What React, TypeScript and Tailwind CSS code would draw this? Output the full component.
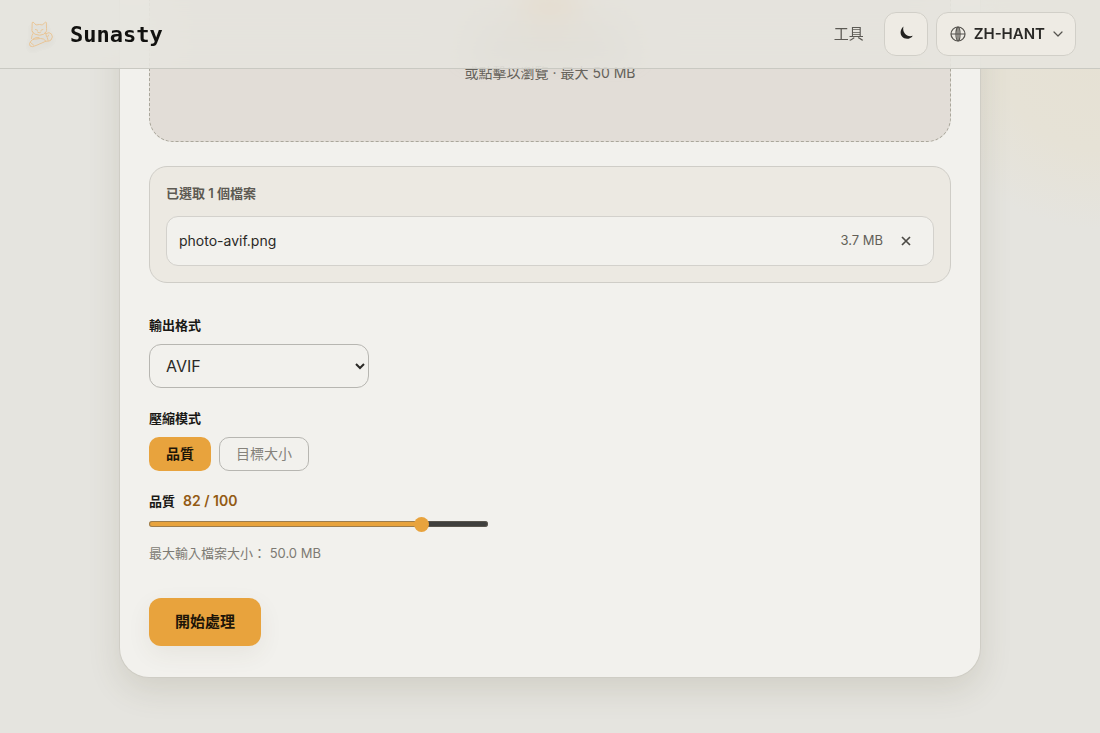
import { useState } from "react";

function CatLogo() {
  return (
    <svg viewBox="0 0 32 32" className="size-8 opacity-90 drop-shadow-md" fill="none" stroke="#e9bd86" strokeWidth="0.900" strokeLinecap="round" strokeLinejoin="round" aria-hidden="true">
      <path d="M8.500 14q-1-1.500-.5-3.500L8.200 4.500q.8-.8 1.800.3l2 2.200q3.500-1 6.500 0l2-2.200q1-1.100 1.800-.3l.2 6q.5 2-.5 3.500-1.500 3-6.500 3.200Q10 17 8.500 14z" />
      <path d="M11.500 11.500l2 .8M19 11.500l-2 .8M13.500 14l1.700.8 1.700-.8M9 15.500q-1.500 2-1.500 5M21 15q1.500 1 1.500 3.500" />
      <path d="M22 15.500q3.500-2 5.500.5 2 3-.5 6-1.500 1.500-5 1.200L12 27.500q-4 2-6 .5-1.500-2.500 1-5 1-1.500 3.500-1.800l6-.7q3-.5 5.500 2.700" />
      <path d="M6.500 24.500l3 2.500M9 21q2-2 6-1.500M24.500 17q-2.500 2-.5 5.500" />
    </svg>
  );
}

function Header() {
  return (
    <header className="sticky top-0 z-10 flex h-[69px] items-center justify-between border-b border-[#c9c9c2] bg-[#e6e5de]/80 px-6 backdrop-blur-xl">
      <a href="#home" className="flex items-center gap-[14px] font-['DejaVu_Sans_Mono',monospace] text-[22px] font-bold text-[#11110f]">
        <CatLogo />
        <span>Sunasty</span>
      </a>
      <nav className="flex items-center gap-2">
        <a href="#tools" className="mr-3 text-[15px] text-[#5c5a54]">工具</a>
        <button type="button" aria-label="切換深色模式" className="flex size-11 items-center justify-center rounded-xl border border-[#d1cfc8] bg-[#eeebe4]">
          <svg viewBox="0 0 16 16" className="size-4" fill="#22211f" aria-hidden="true">
            <path d="M5.500.500C2.500 3 1.600 7.300 4 10.600c2.500 3 8 3.300 10.800-.8-3.300.9-6 .2-7.800-2C5.200 5.600 4.800 2.900 5.500.500z" />
          </svg>
        </button>
        <button type="button" className="flex h-11 items-center gap-2 rounded-xl border border-[#d1cfc8] bg-[#eeebe4] pr-3 pl-[13px] text-[15px] font-semibold text-[#2a2926]">
          <svg viewBox="0 0 16 16" className="size-4" fill="none" stroke="#55534e" strokeWidth="1.200" aria-hidden="true">
            <circle cx="8" cy="8" r="7" />
            <path d="M1 8h14M8 1v14" />
            <ellipse cx="8" cy="8" rx="2" ry="7" />
          </svg>
          <span>ZH-HANT</span>
          <svg viewBox="0 0 10 10" className="size-[10px]" fill="none" stroke="#55534e" strokeWidth="1.200" strokeLinecap="round" strokeLinejoin="round" aria-hidden="true">
            <path d="M1 3l4 4 4-4" />
          </svg>
        </button>
      </nav>
    </header>
  );
}

export default function App() {
  const [quality, setQuality] = useState(82);
  const fill = `${quality}%`;
  return (
    <div className="min-h-screen bg-[#e5e4df] bg-[radial-gradient(circle_at_100%_50px,#e6e1d4_0,#e6e2d6_100px,#e5e4df_180px)] font-[Inter,'Noto_Sans_CJK_TC',sans-serif] text-[#2a2926]">
      <Header />
      <main className="-mt-[69px] px-6 pb-14">
        <section className="mx-auto max-w-[862px] rounded-b-[30px] border border-t-0 border-[#cfcdc5] bg-[#f2f1ed] px-[29px] pb-[31px] shadow-[0_12px_32px_rgba(90,85,50,0.14)]">
          <div className="flex flex-col items-center rounded-b-3xl border border-t-0 border-dashed border-[#aaa79b] bg-[#e2ddd7] pb-14">
            <div className="h-6 w-14 rounded-b-full bg-[#eda75c] blur-md" />
            <div className="my-2 h-[21px] w-40 rounded-md bg-[#bcb8b0] blur-md" />
            <p className="text-sm leading-6 text-[#625f58]">或點擊以瀏覽 · 最大 50 MB</p>
          </div>

          <div className="mt-6 rounded-[18px] border border-[#cfcdc7] bg-[#ece9e2] p-4">
            <h2 className="text-[13px] leading-5 font-semibold text-[#5d5a53]">已選取 1 個檔案</h2>
            <ul className="mt-[13px]">
              <li className="flex h-[50px] items-center rounded-xl border border-[#d3d1cc] bg-[#f2f1ed] px-3">
                <span className="flex-1 text-sm">photo-avif.png</span>
                <span className="text-[13px] text-[#625f58]">3.7 MB</span>
                <button type="button" aria-label="移除 photo-avif.png" className="ml-2 flex w-[30px] items-center justify-center">
                  <svg viewBox="0 0 10 10" className="size-[10px]" stroke="#4c4a45" strokeWidth="1.700" aria-hidden="true">
                    <path d="M1 1l8 8M9 1L1 9" />
                  </svg>
                </button>
              </li>
            </ul>
          </div>

          <form onSubmit={(e) => e.preventDefault()} className="mt-8 flex flex-col items-start">
            <label htmlFor="format" className="text-[13px] leading-5 font-semibold text-[#191815]">輸出格式</label>
            <select id="format" defaultValue="AVIF" className="mt-[9px] h-11 w-[220px] rounded-xl border border-[#b7b6b1] bg-[#f2f1ed] px-3 text-base">
              <option>AVIF</option>
              <option>WebP</option>
              <option>PNG</option>
            </select>

            <fieldset className="mt-5">
              <legend className="text-[13px] leading-5 font-semibold text-[#191815]">壓縮模式</legend>
              <div className="mt-[9px] flex gap-2">
                <button type="button" className="h-[34px] rounded-[10px] bg-[#e8a33d] px-[17px] text-sm font-semibold text-[#1d1508]">品質</button>
                <button type="button" className="h-[34px] rounded-[10px] border border-[#b7b6b1] px-4 text-sm text-[#85827b]">目標大小</button>
              </div>
            </fieldset>

            <label htmlFor="quality" className="mt-5 flex gap-2 text-[13px] leading-5 font-semibold text-[#191815]">
              品質 <output className="text-sm leading-5 text-[#925a13]">{quality} / 100</output>
            </label>
            <input
              id="quality"
              type="range"
              min={1}
              max={100}
              value={quality}
              onChange={(e) => setQuality(Number(e.target.value))}
              style={{ backgroundImage: `linear-gradient(to right, #e8a33d ${fill}, #3f3f3d ${fill})` }}
              className="mt-[10px] h-[6px] w-[339px] appearance-none rounded-full inset-ring inset-ring-[#6b6458]/60 [&::-webkit-slider-thumb]:size-[15px] [&::-webkit-slider-thumb]:appearance-none [&::-webkit-slider-thumb]:rounded-full [&::-webkit-slider-thumb]:bg-[#e8a33d]"
            />
            <p className="mt-4 text-[13px] leading-5 text-[#7d7a73]">最大輸入檔案大小： 50.0 MB</p>
            <button type="submit" className="mt-[35px] h-12 rounded-xl bg-[#e8a33d] px-[26px] text-[15px] font-semibold text-[#1d1508] shadow-[0_8px_24px_rgba(80,70,40,0.07)]">開始處理</button>
          </form>
        </section>
      </main>
    </div>
  );
}
